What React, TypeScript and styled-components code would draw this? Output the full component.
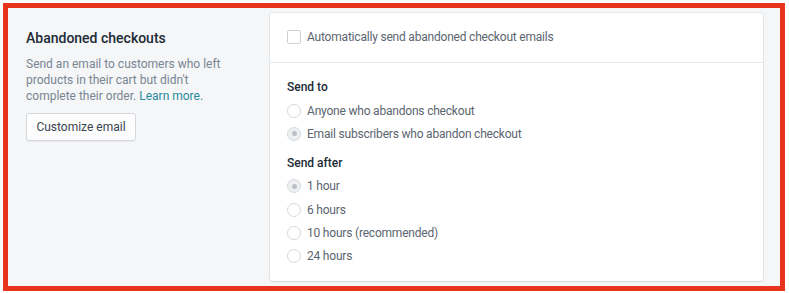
import styled, { createGlobalStyle } from "styled-components";

const GlobalStyle = createGlobalStyle`
  html, body {
    margin: 0;
    padding: 0;
    background: #ffffff;
  }
  body {
    font-family: Roboto, "Noto Sans", sans-serif;
    -webkit-font-smoothing: antialiased;
  }
`;

const Page = styled.div`
  width: 789px;
  height: 293px;
  padding: 3px 4px 2px 3px;
  box-sizing: border-box;
`;

const Frame = styled.div`
  height: 100%;
  box-sizing: border-box;
  border: 5px solid #e8341c;
  background: #f4f6f8;
  display: grid;
  grid-template-columns: 244px 1fr;
  padding: 5px 17px 7px 18px;
`;

const Intro = styled.div`
  padding-top: 16px;
  max-width: 215px;
`;

const Heading = styled.h2`
  margin: 0 0 9px;
  font-size: 14px;
  line-height: 18px;
  font-weight: 500;
  color: #212b36;
`;

const Description = styled.p`
  margin: 0 0 9px;
  font-size: 12px;
  line-height: 16px;
  color: #798591;
`;

const Link = styled.a`
  color: #2a8a9c;
  text-decoration: none;
`;

const Button = styled.button`
  font-family: inherit;
  height: 28px;
  width: 110px;
  padding: 0;
  font-size: 12px;
  color: #3a4450;
  background: linear-gradient(180deg, #ffffff, #fbfbfc);
  border: 1px solid #d3d8dd;
  border-radius: 3px;
  box-shadow: 0 1px 0 rgba(22, 29, 37, 0.05);
`;

const Card = styled.div`
  background: #ffffff;
  border-radius: 3px;
  box-shadow: 0 0 0 1px rgba(63, 63, 68, 0.06), 0 1px 2px rgba(63, 63, 68, 0.12);
`;

const CardHeader = styled.div`
  height: 49px;
  display: flex;
  align-items: center;
  padding: 0 17px;
  border-bottom: 1px solid #e6e9ec;
`;

const CardSection = styled.div`
  padding: 14px 17px 13px;
`;

const Choice = styled.label`
  display: flex;
  align-items: center;
  gap: 6px;
  height: 23.3px;
  font-size: 12px;
  letter-spacing: -0.2px;
  color: #5b6570;
`;

const Box = styled.span`
  width: 12px;
  height: 12px;
  border: 1px solid #c9d0d6;
  border-radius: 2px;
  background: #ffffff;
  flex: none;
`;

const Radio = styled.span<{ $checked?: boolean }>`
  width: 12px;
  height: 12px;
  border: 1px solid #d3d9de;
  border-radius: 50%;
  background: ${(p) => (p.$checked ? "#eef0f2" : "#ffffff")};
  flex: none;
  display: flex;
  align-items: center;
  justify-content: center;

  &::after {
    content: "";
    width: 5px;
    height: 5px;
    border-radius: 50%;
    background: #b9c0c7;
    display: ${(p) => (p.$checked ? "block" : "none")};
  }
`;

const GroupLabel = styled.div<{ $first?: boolean }>`
  font-size: 12px;
  font-weight: 500;
  line-height: 20px;
  color: #212b36;
  margin-top: ${(p) => (p.$first ? "0" : "7px")};
  margin-bottom: 2px;
`;

const sendTo = [
  { label: "Anyone who abandons checkout", checked: false },
  { label: "Email subscribers who abandon checkout", checked: true },
];

const sendAfter = [
  { label: "1 hour", checked: true },
  { label: "6 hours", checked: false },
  { label: "10 hours (recommended)", checked: false },
  { label: "24 hours", checked: false },
];

function App() {
  return (
    <>
      <GlobalStyle />
      <Page>
        <Frame>
          <Intro>
            <Heading>Abandoned checkouts</Heading>
            <Description>
              Send an email to customers who left products in their cart but
              didn't complete their order. <Link href="#">Learn more.</Link>
            </Description>
            <Button>Customize email</Button>
          </Intro>
          <Card>
            <CardHeader>
              <Choice>
                <Box />
                Automatically send abandoned checkout emails
              </Choice>
            </CardHeader>
            <CardSection>
              <GroupLabel $first>Send to</GroupLabel>
              {sendTo.map((o) => (
                <Choice key={o.label}>
                  <Radio $checked={o.checked} />
                  {o.label}
                </Choice>
              ))}
              <GroupLabel>Send after</GroupLabel>
              {sendAfter.map((o) => (
                <Choice key={o.label}>
                  <Radio $checked={o.checked} />
                  {o.label}
                </Choice>
              ))}
            </CardSection>
          </Card>
        </Frame>
      </Page>
    </>
  );
}

export default App;
